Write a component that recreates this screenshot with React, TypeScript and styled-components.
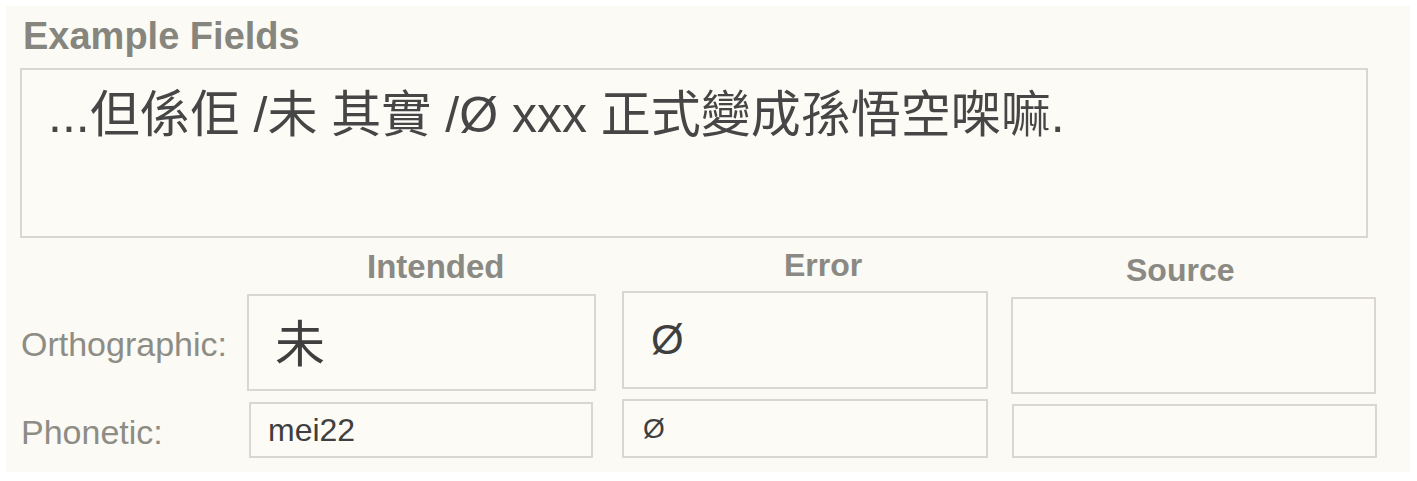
import React from 'react'
import styled, { createGlobalStyle } from 'styled-components'

const GlobalStyle = createGlobalStyle`
  body {
    margin: 0;
    background: #ffffff;
    font-family: "Liberation Sans", Arial, "Noto Sans CJK TC", sans-serif;
  }
`

const Panel = styled.div`
  margin: 6px;
  width: 1404px;
  height: 466px;
  box-sizing: border-box;
  padding: 10px 14px 0 14px;
  background: #fbfaf4;
`

const Heading = styled.h2`
  margin: 0 0 0 3px;
  font-size: 38px;
  line-height: 40px;
  font-weight: 700;
  color: #86857e;
`

const MainField = styled.div`
  margin-top: 12px;
  width: 1348px;
  height: 170px;
  box-sizing: border-box;
  border: 2px solid #d9d7d0;
  background: #fcfbf6;
  padding: 16px 0 0 26px;
  font-family: "Liberation Sans", Arial, "Noto Sans CJK TC", sans-serif;
  font-size: 50px;
  line-height: 58px;
  color: #464646;
  white-space: pre;
`

const Row = styled.div<{ $h: number }>`
  display: grid;
  grid-template-columns: 227px 375px 389px 1fr;
  height: ${p => p.$h}px;
  align-items: start;
`

const ColHead = styled.div<{ $dx: number; $dy: number; $size: number }>`
  margin: ${p => p.$dy}px 0 0 ${p => p.$dx}px;
  font-size: ${p => p.$size}px;
  line-height: 36px;
  font-weight: 700;
  color: #8a8983;
`

const RowLabel = styled.div<{ $dy: number }>`
  margin: ${p => p.$dy}px 0 0 1px;
  font-size: 34px;
  line-height: 38px;
  color: #8d8c85;
`

const Field = styled.div<{ $dx: number; $dy: number; $w: number; $h: number; $pad: number; $size: number; $lift?: number }>`
  display: flex;
  align-items: center;
  margin: ${p => p.$dy}px 0 0 ${p => p.$dx}px;
  width: ${p => p.$w}px;
  height: ${p => p.$h}px;
  box-sizing: border-box;
  border: 2px solid #d9d7d0;
  background: #fcfbf6;
  padding-left: ${p => p.$pad}px;
  padding-bottom: ${p => p.$lift ?? 0}px;
  font-size: ${p => p.$size}px;
  color: #3f3f3f;
`

const App = () => {
  return (
    <>
      <GlobalStyle />
      <Panel>
        <Heading>Example Fields</Heading>
        <MainField>{'...但係佢 /未 其實 /Ø xxx 正式變成孫悟空㗎嘛.'}</MainField>
        <Row $h={52}>
          <div />
          <ColHead $dx={120} $dy={11} $size={33}>Intended</ColHead>
          <ColHead $dx={162} $dy={9} $size={32}>Error</ColHead>
          <ColHead $dx={115} $dy={14} $size={32}>Source</ColHead>
        </Row>
        <Row $h={108}>
          <RowLabel $dy={35}>Orthographic:</RowLabel>
          <Field $dx={0} $dy={4} $w={349} $h={97} $pad={26} $size={50} $lift={6}>未</Field>
          <Field $dx={0} $dy={1} $w={366} $h={98} $pad={27} $size={42}>Ø</Field>
          <Field $dx={0} $dy={7} $w={365} $h={97} $pad={26} $size={42}></Field>
        </Row>
        <Row $h={62}>
          <RowLabel $dy={15}>Phonetic:</RowLabel>
          <Field $dx={2} $dy={4} $w={344} $h={56} $pad={17} $size={32}>mei22</Field>
          <Field $dx={0} $dy={1} $w={366} $h={59} $pad={19} $size={28}>Ø</Field>
          <Field $dx={1} $dy={6} $w={365} $h={54} $pad={19} $size={31}></Field>
        </Row>
      </Panel>
    </>
  )
}

export default App
